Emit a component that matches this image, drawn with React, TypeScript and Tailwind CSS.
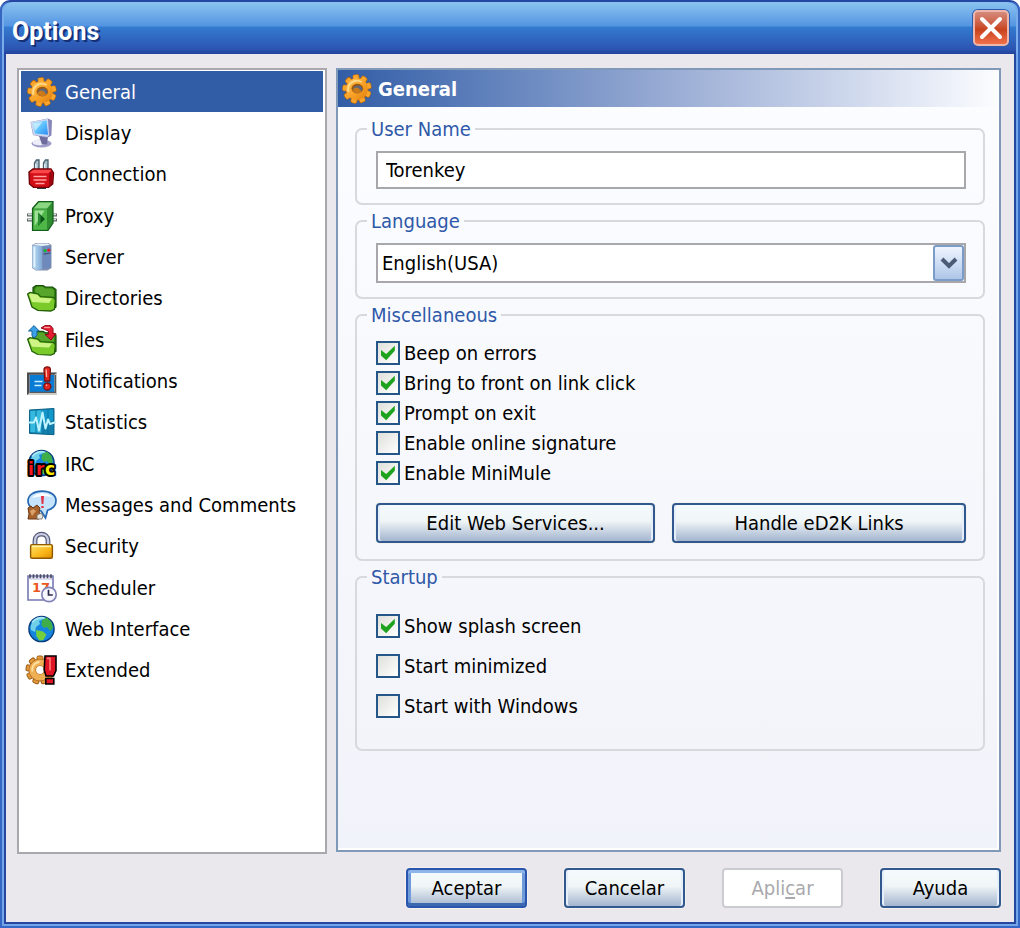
import { useState, type ReactNode } from "react";
import clsx from "clsx";

const TEETH = [0, 40, 80, 120, 160, 200, 240, 280, 320];

function Icon({ children }: { children: ReactNode }) {
  return (
    <svg viewBox="0 0 30 30" className="size-[30px] shrink-0 overflow-visible" aria-hidden="true">
      {children}
    </svg>
  );
}

function GearIcon() {
  return (
    <Icon>
      <defs>
        <linearGradient id="gear" x1="0" y1="0" x2="1" y2="1">
          <stop offset="0" stopColor="#ffc45a" />
          <stop offset="0.55" stopColor="#f9a025" />
          <stop offset="1" stopColor="#db7f10" />
        </linearGradient>
      </defs>
      {TEETH.map((a) => (
        <rect key={a} x="11.6" y="0.2" width="6.8" height="8" rx="2" fill="#b5670c" transform={`rotate(${a - 5} 15 15)`} />
      ))}
      <circle cx="15" cy="15.4" r="11.2" fill="#b5670c" />
      {TEETH.map((a) => (
        <rect key={a} x="12.2" y="0.8" width="5.4" height="8" rx="1.5" fill="#f9a42c" transform={`rotate(${a - 5} 15 15)`} />
      ))}
      <circle cx="15" cy="15" r="10.8" fill="url(#gear)" />
      <path d="M6.5 18a8.8 8.8 0 0 1 13-10" fill="none" stroke="#ffdc8c" strokeWidth="1.8" />
      <ellipse cx="15.3" cy="14.6" rx="5.8" ry="4.8" fill="#9c5a0e" />
      <ellipse cx="15.8" cy="15" rx="4.6" ry="3.6" fill="#5c6680" />
      <path d="M10.5 16.5c1-3 4-3.6 6-2.4l3 3.4c-2 2-6 2.4-9-1z" fill="#c87a1c" />
    </Icon>
  );
}

function DisplayIcon() {
  return (
    <Icon>
      <defs>
        <linearGradient id="screen" x1="0" y1="0" x2="1" y2="1">
          <stop offset="0" stopColor="#b9e8ff" />
          <stop offset="0.5" stopColor="#5cc2ff" />
          <stop offset="1" stopColor="#2b8af0" />
        </linearGradient>
      </defs>
      <ellipse cx="14.5" cy="25.5" rx="10" ry="4" fill="#a09ec8" />
      <ellipse cx="12.5" cy="24.5" rx="7" ry="2.8" fill="#eeeefa" />
      <path d="M12 18l9 0-1 8.5h-5z" fill="#6e6c9c" />
      <path d="M3.5 4L21 .5l4 2-.6 15-4.4 2.5L6 17z" fill="#8587ba" />
      <path d="M3.5 4L21 .8 22 17l-1.5 2L6.5 17z" fill="#ccd8f2" />
      <path d="M5.5 5l14-2.6L21 16.8 8 15.4z" fill="url(#screen)" />
      <path d="M6 5.6l9.5-1.6L8 13z" fill="#d6f3ff" opacity="0.7" />
    </Icon>
  );
}

function PlugIcon() {
  return (
    <Icon>
      <path d="M7.5 13V4l2-3h2.5v12zM16.5 13V4l2-3H21v12z" fill="#a9c0cb" stroke="#465e6b" strokeWidth="1.3" />
      <path d="M8.8 5v6M17.8 5v6" stroke="#eff8fb" strokeWidth="1.2" />
      <path d="M10 27h9v3h-9z" fill="#2c363b" />
      <path d="M2 13l4-3h18l2.5 4-.8 11-4.2 3.4H6.5L2.5 25z" fill="#d40e17" stroke="#720006" strokeWidth="1.4" />
      <path d="M3 13.2l3.6-2.4h18l-3 3.4H4z" fill="#f84748" />
      <path d="M22 14l3.6-2.5-.6 12.8L22 27z" fill="#9e0710" />
      <path d="M6.5 17.5h13M6.5 21h13M8.5 24.5h9" stroke="#ffa4a0" strokeWidth="1.3" />
    </Icon>
  );
}

function ProxyIcon() {
  return (
    <Icon>
      <path d="M0 14h7M0 19h7M23 14h7M23 19h7" stroke="#5d6868" strokeWidth="3.2" />
      <path d="M1 13.6h6M1 18.6h6M23 13.6h6M23 18.6h6" stroke="#d9dfdf" strokeWidth="1.2" />
      <path d="M5.5 7.5l6-7H26V22l-5 7.5H5.5z" fill="#2f8d31" stroke="#125d1a" strokeWidth="1.2" />
      <path d="M6.6 7.6l5.3-6H25L20 7.6z" fill="#8ad683" />
      <path d="M6.4 8.4H20v20.3H6.4z" fill="#4fb648" />
      <path d="M7.6 9.6h10L7.6 25z" fill="#b0ebaa" opacity="0.8" />
      <path d="M11 11.5l7 6.5-7 7z" fill="#0b5418" />
      <path d="M11 25l2.6-2.4V15L11 11.5z" fill="#2b8a34" />
    </Icon>
  );
}

function ServerIcon() {
  return (
    <Icon>
      <defs>
        <linearGradient id="tower" x1="0" y1="0" x2="1" y2="0">
          <stop offset="0" stopColor="#bfe0f8" />
          <stop offset="1" stopColor="#7ea9d5" />
        </linearGradient>
      </defs>
      <path d="M5 3l4-2h12.5l3 2v23l-4 2.5H9L5 26z" fill="#8492ac" />
      <path d="M5.5 3.5L15 4v23.5L9 28l-3.5-2.5z" fill="url(#tower)" />
      <path d="M15.5 4l8.4-.4V25.5l-8.4 2.1z" fill="#6e8abd" />
      <path d="M6 3l4-1.4h11l2 1.3L15 4z" fill="#e5f0fa" />
      <path d="M7.5 5v20" stroke="#e5f5ff" strokeWidth="1.6" />
      <path d="M16.5 12l7-.8" stroke="#47587f" strokeWidth="1.3" />
      <circle cx="18" cy="8.6" r="1.6" fill="#12b329" />
      <circle cx="21.8" cy="8.2" r="1.6" fill="#e01d30" />
    </Icon>
  );
}

function FolderShape() {
  return (
    <>
      <path d="M6 4.5l3-2h7l2.5 1.5h7L29 6.5V24l-4 3L6 16z" fill="#2f8012" stroke="#164c06" strokeWidth="1.2" />
      <path d="M8 6l2-2.2h5.6l2.4 1.6h7L27 7.5V14H9z" fill="#57a52b" />
      <path d="M.6 11L3 9.4l8 1.4 2.6 2.8 12.8.8 2 2.6-1 9.4-3.6 1.6-13-.6L5 24z" fill="#7acb2a" stroke="#245f0a" strokeWidth="1.3" />
      <path d="M2 11.6l1.6-1 6.6 1.2 2.8 3 12 .8-3 4.4L5 19z" fill="#cef486" />
    </>
  );
}

function DirectoriesIcon() {
  return (
    <Icon>
      <FolderShape />
    </Icon>
  );
}

function FilesIcon() {
  return (
    <Icon>
      <g transform="translate(0 4) scale(1 .93)">
        <FolderShape />
      </g>
      <path d="M1.5 6L7 .6 12.2 6H10v4.5L7 13l-2-2.5V6z" fill="#3aa0e8" stroke="#176199" />
      <path d="M14 3l4-2.4h5.5l2.5 3v5h2.8L24 15l-6-5.5h3.4V6L18 4.5z" fill="#e51e34" stroke="#8f0917" />
      <path d="M17 2.5h6" stroke="#ff9e9e" strokeWidth="1.3" />
    </Icon>
  );
}

function NotificationsIcon() {
  return (
    <Icon>
      <path d="M0 6.5h30V29H0z" fill="#cfcdc6" />
      <path d="M0 6.5h30l-2.5 2.2H2.5v18L0 29z" fill="#4e4e50" />
      <path d="M2.8 9h24.4v17.5H2.8z" fill="#087bd5" />
      <path d="M27.5 9H29v18H3v-1.2h24.5z" fill="#595a5d" />
      <path d="M7.5 15.5h8M7.5 19.5h7" stroke="#c6eeff" strokeWidth="1.7" />
      <path d="M17 3.5c0-3.6 6.4-3.6 6.4 0L22.6 15h-4.8z" fill="#e32722" stroke="#81100f" strokeWidth="1.3" />
      <circle cx="20.3" cy="20.5" r="3.5" fill="#e32722" stroke="#81100f" strokeWidth="1.3" />
      <path d="M19.2 3.5l.4 7.5M19 19.6l1-.7" stroke="#ffb7a4" strokeWidth="1.3" />
    </Icon>
  );
}

function StatisticsIcon() {
  return (
    <Icon>
      <path d="M2.5 3L27 1.5v26.2l-24.5-1.3z" fill="#127eab" stroke="#0c6489" />
      <path d="M3.3 4l11-.8v22.5l-11-.6z" fill="#35b9df" />
      <path d="M14.3 3.2L26 2.5V14H14.3z" fill="#1397cb" />
      <path d="M9 3v23.5M21 2v25" stroke="#0b74a3" />
      <path d="M1 15.5h6l2-5 3 13 3.5-18 3 16 2.5-9 2 4.5L29 15" fill="none" stroke="#bff3ff" strokeWidth="2" strokeLinejoin="round" />
    </Icon>
  );
}

function Globe({ y }: { y: number }) {
  return (
    <g transform={`translate(0 ${y})`}>
      <circle cx="14.5" cy="15" r="12.6" fill="#1486e0" stroke="#073b79" strokeWidth="1.4" />
      <path d="M6 7.5c3-4 8-5 11-4.5l-2 3-3 1 1 3-4 3-1 5-4-2c-1-3 0-6 2-8.5z" fill="#6fd0e8" />
      <path d="M15 6l5-2.6 4.5 4.6 1.4 6-2.6 3-3.3-4-3 1-2.6-3z" fill="#3fae48" />
      <path d="M9 16l7 1.4 3.4 3.2-3 5.4-4 .6-3-4.6z" fill="#74cf3c" />
      <path d="M5 8.5c3-4.5 9-6 13-4" fill="none" stroke="#bdf2ff" strokeWidth="1.8" opacity="0.8" />
    </g>
  );
}

function IrcIcon() {
  return (
    <Icon>
      <Globe y={-1} />
      <g
        fontFamily="DejaVu Sans, sans-serif"
        fontWeight="700"
        fontSize="17"
        stroke="#000"
        strokeWidth="4"
        strokeLinejoin="round"
        paintOrder="stroke"
      >
        <text x="1" y="26" fill="#f3161d">i</text>
        <text x="9" y="26" fill="#f3161d">r</text>
        <text x="18" y="26" fill="#fff000">c</text>
      </g>
    </Icon>
  );
}

function MessagesIcon() {
  return (
    <Icon>
      <path d="M15 1.2c8.2 0 14 3.9 14 9.3 0 5.2-3.9 8.5-8.4 9.8L18.5 28l-4.3-7C6.7 20.5 1 17 1 11 1 5.2 7 1.2 15 1.2z" fill="#c5e4fb" stroke="#2568b1" strokeWidth="1.7" />
      <path d="M5 8c3-5.7 16-6.5 20-1-5-1.5-13-1-20 1z" fill="#fff" opacity="0.9" />
      <path d="M14 6h3l-.6 8h-1.8zM14.3 16h2.4v2h-2.4z" fill="#df3147" />
      <path d="M1 18l3-2 2 2 4-3 3 3-1 4 2 3-2 4H1l1-5z" fill="#a7632e" stroke="#6b3512" />
      <path d="M3 21l3-2 3 2-4 5z" fill="#dba16b" />
      <path d="M10 25l4-2 2 3-1 3h-5z" fill="#e8e5df" stroke="#6c655b" strokeWidth="0.8" />
    </Icon>
  );
}

function SecurityIcon() {
  return (
    <Icon>
      <defs>
        <linearGradient id="lock" x1="0" y1="0" x2="1" y2="1">
          <stop offset="0" stopColor="#ffe36a" />
          <stop offset="0.6" stopColor="#f8b618" />
          <stop offset="1" stopColor="#df8c00" />
        </linearGradient>
      </defs>
      <path d="M8 15V9.5c0-8.5 13-8.5 13 0V15" fill="none" stroke="#555a7b" strokeWidth="4.8" />
      <path d="M8 15V9.5c0-8.5 13-8.5 13 0V15" fill="none" stroke="#cacde2" strokeWidth="2.4" />
      <rect x="3.6" y="13.6" width="21.8" height="13.6" rx="1.5" fill="url(#lock)" stroke="#8e5900" strokeWidth="1.4" />
      <path d="M5 15.4h19" stroke="#fff3ab" strokeWidth="1.5" />
    </Icon>
  );
}

function SchedulerIcon() {
  return (
    <Icon>
      <path d="M1 3h25v24H1z" fill="#fff" stroke="#7678b3" strokeWidth="1.6" />
      <path d="M2 4h23v3H2z" fill="#dedff0" />
      <path d="M3 1.3v4M6.5 1.3v4M10 1.3v4M13.5 1.3v4M17 1.3v4M20.5 1.3v4M24 1.3v4" stroke="#4b4a63" strokeWidth="1.6" />
      <text x="5" y="19" fill="#ed5520" fontFamily="DejaVu Sans, sans-serif" fontWeight="700" fontSize="13">17</text>
      <circle cx="22" cy="21.5" r="7.2" fill="#f8f9ff" stroke="#8183b6" strokeWidth="1.7" />
      <path d="M21.5 16.8v5.2h4.3" fill="none" stroke="#2b294a" strokeWidth="1.7" />
    </Icon>
  );
}

function WebIcon() {
  return (
    <Icon>
      <Globe y={0} />
    </Icon>
  );
}

function ExtendedIcon() {
  return (
    <Icon>
      {TEETH.map((a) => (
        <rect key={a} x="10" y="1" width="6" height="8" rx="1.5" fill="#e39a3c" stroke="#9b5a12" transform={`rotate(${a} 13 15)`} />
      ))}
      <circle cx="13" cy="15" r="7.6" fill="none" stroke="#ad681b" strokeWidth="7.4" />
      <circle cx="13" cy="15" r="7.6" fill="none" stroke="#efaf55" strokeWidth="6" />
      <path d="M5.5 16.5a7.6 7.6 0 0 1 7-9.5" fill="none" stroke="#ffe0a0" strokeWidth="1.8" />
      <path d="M18 1h11v14.5L26.5 21H19l-1.8-6z" fill="#df1525" stroke="#000" strokeWidth="1.6" />
      <path d="M20 3.4h3v12" fill="none" stroke="#ff7b74" strokeWidth="1.6" />
      <path d="M18.8 23.5h8V29h-8z" fill="#df1525" stroke="#000" strokeWidth="1.6" />
    </Icon>
  );
}

const PAGES = [
  { name: "General", icon: GearIcon },
  { name: "Display", icon: DisplayIcon },
  { name: "Connection", icon: PlugIcon },
  { name: "Proxy", icon: ProxyIcon },
  { name: "Server", icon: ServerIcon },
  { name: "Directories", icon: DirectoriesIcon },
  { name: "Files", icon: FilesIcon },
  { name: "Notifications", icon: NotificationsIcon },
  { name: "Statistics", icon: StatisticsIcon },
  { name: "IRC", icon: IrcIcon },
  { name: "Messages and Comments", icon: MessagesIcon },
  { name: "Security", icon: SecurityIcon },
  { name: "Scheduler", icon: SchedulerIcon },
  { name: "Web Interface", icon: WebIcon },
  { name: "Extended", icon: ExtendedIcon },
];

function Group({ title, className, children }: { title: string; className?: string; children: ReactNode }) {
  return (
    <fieldset className="min-w-0 rounded-[7px] border-2 border-[#d8d8dd]">
      <legend className="ml-[10px] px-1 leading-6 text-[#2f59a8]">{title}</legend>
      <div className={clsx("pr-[17px] pl-[19px]", className)}>{children}</div>
    </fieldset>
  );
}

function Check({ label, defaultChecked }: { label: string; defaultChecked?: boolean }) {
  return (
    <label className="flex items-center gap-1 leading-6">
      <span className="relative flex size-6 shrink-0">
        <input
          type="checkbox"
          defaultChecked={defaultChecked}
          className="peer size-6 appearance-none border-2 border-[#245687] bg-linear-to-br from-[#dfdfdb] to-white"
        />
        <svg viewBox="0 0 24 24" className="pointer-events-none absolute inset-0 hidden size-6 peer-checked:block" aria-hidden="true">
          <path d="M5 9v5.4l5.2 4.8 8.6-9.4V4.8L10.2 13z" fill="#1fa31f" />
        </svg>
      </span>
      {label}
    </label>
  );
}

function Button({ children, primary, disabled }: { children: ReactNode; primary?: boolean; disabled?: boolean }) {
  return (
    <button
      type="button"
      disabled={disabled}
      className={clsx(
        "h-10 rounded-[4px] border-2 leading-6",
        disabled && "border-[#cbcbd2] bg-white text-[#a9a9ad]",
        !disabled && "bg-linear-to-b from-[#f5faff] via-[#f0f5f6] via-45% to-[#a3b5cf]",
        primary && "border-[#2a55ae] shadow-[inset_0_3px_0_#8db5ea,inset_0_-3px_0_#3c68b0,inset_3px_0_0_#6f9bdb,inset_-3px_0_0_#6f9bdb,0_0_0_1px_#f4f2ee]",
        !disabled && !primary && "border-[#31598f] shadow-[inset_2px_0_0_#e6eefa,inset_-2px_0_0_#e6eefa,0_0_0_1px_#f4f2ee]"
      )}
    >
      {children}
    </button>
  );
}

export default function App() {
  const [page, setPage] = useState("General");
  const [userName, setUserName] = useState("Torenkey");

  return (
    <div className="flex min-h-screen flex-col font-['DejaVu_Sans_Condensed','Noto_Sans',sans-serif] text-[20px] text-black">
      <header className="flex h-[54px] items-center justify-between rounded-t-[10px] border-t-2 border-[#2446a4] bg-[linear-gradient(to_bottom,#8bc3ef_0,#5495e3_24px,#347bd0_25px,#2c55b2_47px,#21429c_52px)] pr-[11px] pl-3 shadow-[inset_2px_0_0_#3566c2,inset_-2px_0_0_#3566c2,inset_4px_0_0_#79aeea,inset_-4px_0_0_#79aeea]">
        <h1 className="pt-2 font-['Roboto',sans-serif] text-[25px] leading-8 font-bold text-white [text-shadow:2px_2px_0_#163078]">Options</h1>
        <button
          type="button"
          aria-label="Close"
          className="grid size-9 place-items-center rounded-[5px] border-2 border-[#eeb5ab] bg-linear-to-b from-[#d58a7c] via-[#c8431c] via-55% to-[#f0704a] shadow-[0_0_0_1px_#2c5cae]"
        >
          <svg viewBox="0 0 24 24" className="size-6" aria-hidden="true">
            <path d="M3 3l18 18M21 3L3 21" stroke="#fff" strokeWidth="4" strokeLinecap="round" />
          </svg>
        </button>
      </header>

      <div className="flex flex-1 flex-col bg-[#eae8ec] pt-[14px] pr-[19px] pb-5 pl-[17px] shadow-[inset_2px_0_0_#3467c6,inset_-2px_0_0_#3467c6,inset_0_-2px_0_#3467c6,inset_4px_0_0_#74a5e6,inset_-4px_0_0_#74a5e6,inset_0_-4px_0_#74a5e6,inset_6px_0_0_#2547a2,inset_-6px_0_0_#2547a2,inset_0_-6px_0_#2547a2]">
        <div className="grid flex-1 grid-cols-[310px_1fr] gap-[9px]">
          <nav className="border-2 border-[#a9a8ae] bg-white px-[2px] py-px">
            <ul className="grid h-[620px] auto-rows-fr">
              {PAGES.map(({ name, icon: PageIcon }) => (
                <li key={name} className="flex">
                  <button
                    type="button"
                    onClick={() => setPage(name)}
                    className={clsx(
                      "flex flex-1 items-center gap-2 pl-[6px] text-left leading-6",
                      page === name && "bg-[#315da6] text-white"
                    )}
                  >
                    <PageIcon />
                    {name}
                  </button>
                </li>
              ))}
            </ul>
          </nav>

          <main className="mb-[2px] border-2 border-[#8099b9] bg-linear-to-b from-[#fcfdff] to-[#f1f3fa] shadow-[inset_-2px_-2px_0_#fff]">
            <div className="flex h-[37px] items-center gap-[6px] bg-linear-to-r from-[#315da6] via-[#9dafd6] via-52% to-[#fcfdff] pl-1">
              <GearIcon />
              <h2 className="font-bold text-white">General</h2>
            </div>

            <form className="flex flex-col gap-1 pt-[10px] pr-[14px] pl-[17px]" onSubmit={(e) => e.preventDefault()}>
              <Group title="User Name" className="pt-[10px] pb-[14px]">
                <input
                  type="text"
                  aria-label="User Name"
                  value={userName}
                  onChange={(e) => setUserName(e.target.value)}
                  className="block h-[38px] w-full border-2 border-[#a8a8ac] bg-white px-2"
                />
              </Group>

              <Group title="Language" className="pt-[10px] pb-[14px]">
                <div className="relative">
                  <select aria-label="Language" className="block h-10 w-full appearance-none border-2 border-[#a8a8ac] bg-white pr-9 pl-1">
                    <option>English(USA)</option>
                  </select>
                  <span className="pointer-events-none absolute inset-y-[2px] right-[2px] grid w-[31px] place-items-center rounded-[3px] border-2 border-[#7b9cc9] bg-linear-to-b from-[#eff5fe] to-[#aec6e8]">
                    <svg viewBox="0 0 18 12" className="h-3 w-[18px]" aria-hidden="true">
                      <path d="M2 2l7 7 7-7" fill="none" stroke="#4c5b75" strokeWidth="4" />
                    </svg>
                  </span>
                </div>
              </Group>

              <Group title="Miscellaneous" className="pt-[14px] pb-4">
                <div className="flex flex-col gap-[6px]">
                  <Check label="Beep on errors" defaultChecked />
                  <Check label="Bring to front on link click" defaultChecked />
                  <Check label="Prompt on exit" defaultChecked />
                  <Check label="Enable online signature" />
                  <Check label="Enable MiniMule" defaultChecked />
                </div>
                <div className="mt-[18px] grid grid-cols-[19fr_20fr] gap-[17px]">
                  <Button>Edit Web Services...</Button>
                  <Button>Handle eD2K Links</Button>
                </div>
              </Group>

              <Group title="Startup" className="pt-[25px] pb-[31px]">
                <div className="flex flex-col gap-4">
                  <Check label="Show splash screen" defaultChecked />
                  <Check label="Start minimized" />
                  <Check label="Start with Windows" />
                </div>
              </Group>
            </form>
          </main>
        </div>

        <footer className="mt-[14px] grid auto-cols-[121px] grid-flow-col justify-end gap-[37px]">
          <Button primary>Aceptar</Button>
          <Button>Cancelar</Button>
          <Button disabled>
            Apli<span className="underline underline-offset-2">c</span>ar
          </Button>
          <Button>Ayuda</Button>
        </footer>
      </div>
    </div>
  );
}
